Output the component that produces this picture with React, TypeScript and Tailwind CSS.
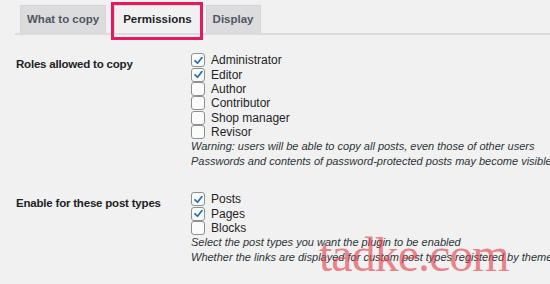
import React from "react"

const roles = [
  { name: "Administrator", checked: true },
  { name: "Editor", checked: true },
  { name: "Author", checked: false },
  { name: "Contributor", checked: false },
  { name: "Shop manager", checked: false },
  { name: "Revisor", checked: false },
]

const postTypes = [
  { name: "Posts", checked: true },
  { name: "Pages", checked: true },
  { name: "Blocks", checked: false },
]

function Checkbox({ checked }: { checked: boolean }) {
  return (
    <span className="w-[14px] h-[14px] rounded-[3px] border border-[#8c8f94] bg-[#fbfbfb] flex items-center justify-center shrink-0">
      {checked && (
        <svg width="11" height="11" viewBox="0 0 12 12" fill="none">
          <path d="M2.2 6.3 L4.9 9 L9.8 2.8" stroke="#2271b1" strokeWidth="1.9" strokeLinecap="round" strokeLinejoin="round" />
        </svg>
      )}
    </span>
  )
}

function Row({ label, items, notes }: { label: string; items: { name: string; checked: boolean }[]; notes: string[] }) {
  return (
    <div className="flex">
      <div className="w-[191px] shrink-0 pl-[16px] pt-[3px] text-[11.5px] tracking-[-0.2px] font-bold text-[#1d2327] whitespace-nowrap">
        {label}
      </div>
      <div className="flex flex-col">
        {items.map((item) => (
          <label key={item.name} className="flex items-center gap-[6px] h-[14.4px] text-[12px] text-[#1d2327]">
            <Checkbox checked={item.checked} />
            {item.name}
          </label>
        ))}
        {notes.map((note) => (
          <p key={note} className="h-[14.4px] leading-[14.4px] text-[11px] italic text-[#2c3338] whitespace-nowrap">
            {note}
          </p>
        ))}
      </div>
    </div>
  )
}

export default function App() {
  return (
    <div className="relative w-[550px] h-[284px] overflow-hidden bg-[#f1f1f1] font-['Liberation_Sans',Arial,sans-serif]">
      {/* Tabs */}
      <div className="ml-[15px] pt-[5px] pl-[5px] flex border-b-2 border-[#dcdcde]">
        <div className="h-[28px] px-[6px] flex items-center bg-[#dcdcde] border border-b-0 border-[#d5d5d8] text-[11.5px] font-bold text-[#50575e]">
          What to copy
        </div>
        <div className="relative ml-[8px] h-[28px] -mb-[2px] px-[8px] flex items-center bg-[#f1f1f1] border border-b-0 border-[#d5d5d8] text-[11.5px] font-bold text-[#1d2327]">
          Permissions
          <span className="absolute -left-[4px] -right-[3px] -top-[4px] -bottom-[7px] border-[3px] border-[#e5195f]" />
        </div>
        <div className="ml-[5px] h-[28px] px-[6px] flex items-center bg-[#dcdcde] border border-b-0 border-[#d5d5d8] text-[11.5px] font-bold text-[#50575e]">
          Display
        </div>
      </div>

      <div className="pt-[18px] flex flex-col gap-[24px]">
        <Row
          label="Roles allowed to copy"
          items={roles}
          notes={[
            "Warning: users will be able to copy all posts, even those of other users",
            "Passwords and contents of password-protected posts may become visible",
          ]}
        />
        <Row
          label="Enable for these post types"
          items={postTypes}
          notes={[
            "Select the post types you want the plugin to be enabled",
            "Whether the links are displayed for custom post types registered by themes",
          ]}
        />
      </div>

      {/* watermark */}
      <span className="absolute left-[319px] top-[231px] text-[48px] leading-none tracking-[-1px] font-['Liberation_Serif',serif] text-[#e4414c]/65 pointer-events-none">
        tadke.com
      </span>
    </div>
  )
}
